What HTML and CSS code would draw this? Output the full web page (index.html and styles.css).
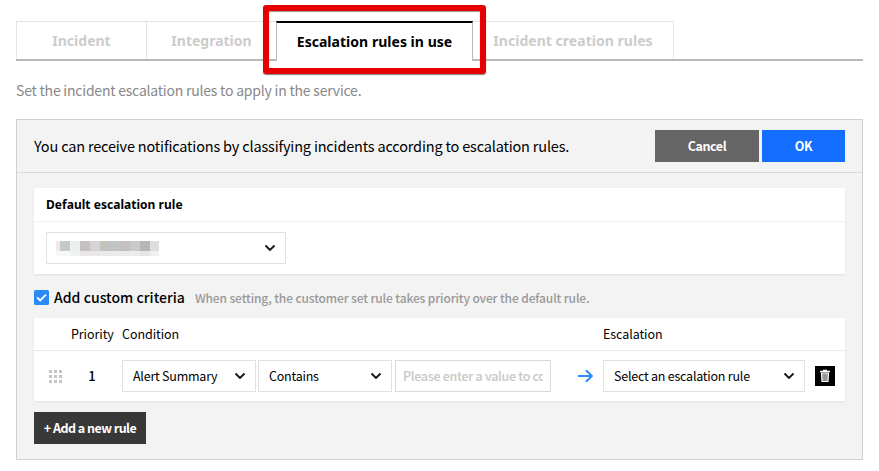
FILE: index.html
```html
<!DOCTYPE html>
<html lang="en">
<head>
<meta charset="utf-8">
<title>Escalation rules</title>
<link rel="stylesheet" href="styles.css">
</head>
<body>
<nav class="tabs">
  <a class="tab"><span>Incident</span></a>
  <a class="tab"><span>Integration</span></a>
  <a class="tab tab-active"><span>Escalation rules in use</span></a>
  <a class="tab tab-last"><span>Incident creation rules</span></a>
  <div class="highlight"></div>
</nav>
<p class="intro"><span>Set the incident escalation rules to apply in the service.</span></p>
<main class="panel">
  <header class="panel-head">
    <span class="head-text">You can receive notifications by classifying incidents according to escalation rules.</span>
    <div class="actions">
      <button class="btn cancel"><span>Cancel</span></button>
      <button class="btn ok"><span>OK</span></button>
    </div>
  </header>
  <div class="panel-body">
    <section class="card">
      <h2 class="card-title"><span>Default escalation rule</span></h2>
      <div class="card-content">
        <div class="select select-default">
          <svg class="mosaic" width="103" height="15" viewBox="0 0 103 15" shape-rendering="crispEdges">
            <path fill="#f3e8e8" d="M0 0h4v10H0z"/><path fill="#c5cac6" d="M4 0h10v10H4z"/><path fill="#eaefef" d="M14 0h10v10H14z"/><path fill="#c4c0c2" d="M24 0h10v10H24z"/><path fill="#d4d4d6" d="M34 0h10v10H34z"/><path fill="#c3c3be" d="M44 0h10v10H44z"/><path fill="#bfc4c4" d="M54 0h10v10H54z"/><path fill="#c3c0c3" d="M64 0h10v10H64z"/><path fill="#cac8ca" d="M74 0h10v10H74z"/><path fill="#b5b6b8" d="M84 0h10v10H84z"/><path fill="#dddee0" d="M94 0h9v10H94z"/>
            <path fill="#f8f8f8" d="M0 10h14v5H0z"/><path fill="#f1f2f2" d="M14 10h10v5H14z"/><path fill="#e9e7e9" d="M24 10h20v5H24z"/><path fill="#ecebec" d="M44 10h40v5H44z"/><path fill="#e6e6e8" d="M84 10h10v5H84z"/><path fill="#f0f0f1" d="M94 10h9v5H94z"/>
          </svg>
          <svg class="chevron" width="12" height="8" viewBox="0 0 12 8"><path d="M1.5 1.5 6 6l4.500-4.500"/></svg>
        </div>
      </div>
    </section>
    <div class="criteria">
      <svg class="check" width="15" height="15" viewBox="0 0 15 15"><rect width="15" height="15" rx="1.500" fill="#2a8af6"/><path d="M3 7.300 6.200 10.500 12 4.700" fill="none" stroke="#fff" stroke-width="1.900"/></svg>
      <span class="criteria-label">Add custom criteria</span>
      <span class="criteria-note">When setting, the customer set rule takes priority over the default rule.</span>
    </div>
    <section class="rules">
      <div class="row row-head">
        <span></span><span class="th-priority">Priority</span><span class="th-condition">Condition</span><span></span><span class="th-escalation">Escalation</span><span></span>
      </div>
      <div class="row row-rule">
        <svg class="grip" width="13" height="13" viewBox="0 0 13 13" shape-rendering="crispEdges"><path fill="#c5c5c5" d="M0 0h3v3H0zM5 0h3v3H5zM10 0h3v3h-3zM0 5h3v3H0zM5 5h3v3H5zM10 5h3v3h-3zM0 10h3v3H0zM5 10h3v3H5zM10 10h3v3h-3z"/></svg>
        <span class="priority">1</span>
        <div class="condition">
          <div class="select"><span>Alert Summary</span><svg class="chevron" width="12" height="8" viewBox="0 0 12 8"><path d="M1.500 1.500 6 6l4.500-4.500"/></svg></div>
          <div class="select"><span>Contains</span><svg class="chevron" width="12" height="8" viewBox="0 0 12 8"><path d="M1.500 1.500 6 6l4.500-4.500"/></svg></div>
          <div class="field"><span>Please enter a value to compare</span></div>
        </div>
        <svg class="arrow" width="16" height="14" viewBox="0 0 16 14"><path d="M0 7h14M8 1.300l5.800 5.700L8 12.700" fill="none" stroke="#2a8af6" stroke-width="2"/></svg>
        <div class="select"><span>Select an escalation rule</span><svg class="chevron" width="12" height="8" viewBox="0 0 12 8"><path d="M1.500 1.500 6 6l4.500-4.500"/></svg></div>
        <button class="trash" aria-label="Delete"><svg width="20" height="20" viewBox="0 0 20 20"><path d="M5 5.500h10M8 4.500h4" fill="none" stroke="#fff" stroke-width="1.400"/><path d="M6.500 7h7l-.5 8.500H7z" fill="#888" stroke="#fff" stroke-width="1.200"/><path d="M8.800 8v6M11.200 8v6" stroke="#bbb" stroke-width=".7"/></svg></button>
      </div>
    </section>
    <button class="add"><span>+ Add a new rule</span></button>
  </div>
</main>
</body>
</html>
```
FILE: styles.css
```css
* { box-sizing: border-box; }
body {
  margin: 0;
  padding: 21px 16px 0;
  width: 879px;
  height: 471px;
  overflow: hidden;
  background: #fff;
  color: #000;
  font: 12.5px/20px "Noto Sans CJK KR", sans-serif;
}
span { white-space: nowrap; }
button { border: 0; padding: 0; font: inherit; }
.tabs {
  position: relative;
  display: flex;
  width: 847px;
  height: 40px;
  border-bottom: 2px solid #b9b9b9;
  font: 700 14px/20px "Noto Sans", sans-serif;
}
.tab {
  display: flex;
  justify-content: center;
  align-items: center;
  width: 130px;
  height: 38px;
  border: 1px solid #e5e5e5;
  border-width: 1px 0 0 1px;
  color: #ccc;
}
.tab-active {
  width: 197px;
  height: 40px;
  border: 1px solid #b9b9b9;
  border-top: 2px solid #000;
  border-bottom: 0;
  background: #fff;
  color: #000;
  letter-spacing: .03px;
}
.tab-last { width: 201px; border-width: 1px 1px 0 0; letter-spacing: .03px; }
.highlight {
  position: absolute;
  left: 247px;
  top: -16px;
  width: 223px;
  height: 69px;
  border: 6px solid #e60000;
  border-radius: 3px;
  box-shadow: 0 1px 1px rgba(0, 0, 0, .5), inset 0 1px 1px rgba(0, 0, 0, .4);
}
.intro { margin: 19px 0; font-size: 14px; color: #888; line-height: 20px; letter-spacing: -.21px; }
.panel { width: 847px; height: 341px; border: 1px solid #d0d0d0; background: #f3f3f3; }
.panel-head {
  display: flex;
  justify-content: space-between;
  align-items: center;
  height: 53px;
  padding: 0 17px;
  border-bottom: 1px solid #d9d9d9;
}
.head-text { font-size: 14.5px; letter-spacing: -.18px; }
.actions { display: flex; gap: 3px; }
.btn { height: 32px; color: #fff; font-weight: 700; letter-spacing: -.45px; }
.cancel { width: 104px; background: #666; }
.ok { width: 83px; background: #146eff; }
.panel-body { padding: 15px 17px 0; }
.card, .rules { background: #fff; box-shadow: 0 1px 2px rgba(0, 0, 0, .08); }
.card { height: 86px; }
.card-title {
  margin: 0;
  height: 34px;
  padding: 7px 12px;
  border-bottom: 1px solid #f0f0f0;
  font: 700 12px/19px "Noto Sans", sans-serif;
  letter-spacing: .03px;
}
.card-content { padding: 10px 12px; }
.select {
  display: flex;
  align-items: center;
  justify-content: space-between;
  height: 32px;
  padding: 0 9px 0 10px;
  border: 1px solid #e1e1e1;
  background: #fff;
  letter-spacing: -.23px;
}
.select-default { width: 240px; padding-left: 9px; }
.chevron { fill: none; stroke: #111; stroke-width: 1.8; }
.criteria { display: flex; align-items: center; height: 44px; padding-top: 3px; }
.criteria-label { margin: -2px 0 0 5px; font-size: 14px; font-weight: 500; letter-spacing: .04px; }
.criteria-note {
  margin-left: 10px;
  color: #999;
  font-size: 12px;
  font-weight: 500;
  letter-spacing: -.12px;
}
.rules { height: 83px; }
.row {
  display: grid;
  grid-template-columns: 37px 51px 447px 34px 202px 1fr;
  align-items: center;
}
.row-head { height: 33px; border-bottom: 1px solid #e8e8e8; letter-spacing: -.07px; }
.row-rule { height: 50px; }
.grip { margin-left: 15px; }
.priority { text-align: center; width: 42px; font-size: 13px; font-weight: 500; }
.condition { display: grid; grid-template-columns: 134px 134px 157px; column-gap: 2px; }
.condition .field { margin-left: 1px; }
.field {
  height: 32px;
  padding: 5px 7px;
  border: 1px solid #d9d9d9;
  color: #c8c8c8;
}
.field span { display: block; overflow: hidden; font-weight: 500; letter-spacing: -.3px; }
.arrow { margin-left: 9px; }
.trash { width: 20px; height: 20px; margin-left: 10px; background: #000; }
.trash svg { display: block; }
.add {
  display: block;
  width: 112px;
  height: 32px;
  margin-top: 11px;
  background: #383838;
  color: #fff;
  font-weight: 700;
  letter-spacing: -.52px;
}
```
